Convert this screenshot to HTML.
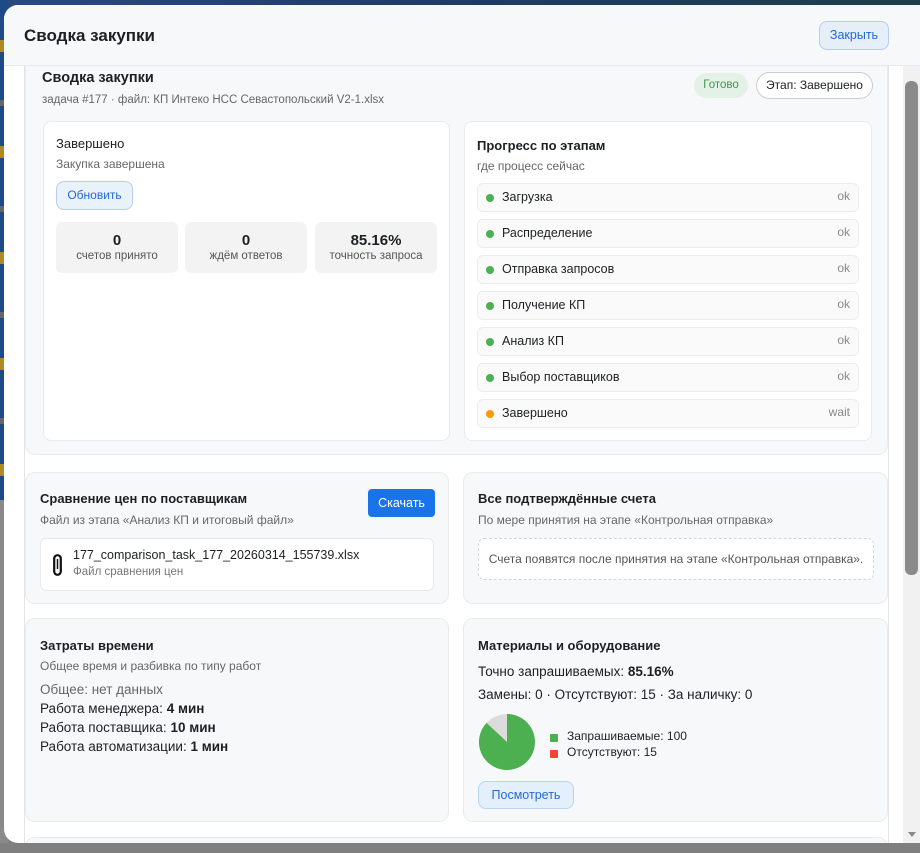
<!DOCTYPE html>
<html><head><meta charset="utf-8"><style>
*{box-sizing:border-box;margin:0;padding:0}
body{width:920px;height:853px;overflow:hidden;font-family:"Segoe UI","Liberation Sans","DejaVu Sans",sans-serif;color:#1d1f23;background:#7f7f7f;position:relative}
.bgtop{position:absolute;left:0;top:0;width:920px;height:12px;background:linear-gradient(90deg,#2a4a7a,#1f3b66 50%,#1d3f4a)}
.bgleft{position:absolute;left:0;top:0;width:8px;height:843px;background:repeating-linear-gradient(180deg,#1f4a8a 0 40px,#b08a20 40px 52px,#1f4a8a 52px 100px,#666 100px 106px)}
.bgleft2{position:absolute;left:0;top:500px;width:8px;height:343px;background:#8a8a8a}
.modal{position:absolute;left:4px;top:5px;width:930px;height:838px;background:#fff;border-radius:14px;overflow:hidden}
.hdr{height:61px;background:#f7f8fa;border-bottom:1px solid #e6e8eb;position:relative;z-index:2}
.hdr h1{position:absolute;left:20px;top:21px;font-size:17px;font-weight:700}
.btn-l{position:absolute;background:#e6eef8;border:1px solid #b5cdee;color:#2468d8;border-radius:8px;font-size:12.5px;text-align:center}
.scroll{position:absolute;left:20px;top:61px;width:865px;height:777px;border-left:1px solid #e2e4e7;border-right:1px solid #e2e4e7;overflow:hidden}
.card{position:absolute;background:#f7f8fa;border:1px solid #e8eaed;border-radius:10px}
.wcard{position:absolute;background:#fff;border:1px solid #e8eaed;border-radius:8px}
.t{position:absolute;white-space:nowrap}
.b{font-weight:700}
.sub{color:#666;font-size:12px}
.stat{position:absolute;top:100px;width:122px;height:51px;background:#f3f3f3;border-radius:6px;text-align:center}
.stat .n{font-size:15px;font-weight:700;margin-top:10px}
.stat .l{font-size:11.5px;color:#555;margin-top:1px}
.row{position:absolute;left:12px;width:382px;height:29px;background:#fafafa;border:1px solid #ececec;border-radius:6px;font-size:12.5px}
.row .d{position:absolute;left:8px;top:10px;width:8px;height:8px;border-radius:50%;background:#4caf50}
.row .x{position:absolute;left:24px;top:6px}
.row .s{position:absolute;right:8px;top:5px;color:#888;font-size:12px}
.sb{position:absolute;left:903px;top:12px;width:17px;height:831px;background:#f1f1f1}
</style></head><body>
<div class="bgtop"></div><div class="bgleft"></div><div class="bgleft2"></div>
<div class="modal">
 <div class="hdr"><h1>Сводка закупки</h1>
  <div class="btn-l" style="left:815px;top:16px;width:70px;height:29px;line-height:27px">Закрыть</div></div>
 <div class="scroll">
  <!-- summary card -->
  <div class="card" style="left:0;top:-20px;width:863px;height:409px;border-top:none;border-radius:0 0 10px 10px">
   <div class="t b" style="left:16px;top:24px;font-size:14.5px">Сводка закупки</div>
   <div class="t sub" style="left:16px;top:48px;font-size:11.5px">задача #177 · файл: КП Интеко НСС Севастопольский V2-1.xlsx</div>
   <div class="t" style="left:668px;top:27px;width:54px;height:25px;border-radius:13px;background:#e3f1e6;color:#3a9a4e;font-size:11.5px;text-align:center;line-height:25px">Готово</div>
   <div class="t" style="left:730px;top:26px;width:117px;height:27px;border-radius:14px;background:#fff;border:1px solid #ccc;font-size:12px;text-align:center;line-height:25px">Этап: Завершено</div>
   <div class="wcard" style="left:17px;top:75px;width:407px;height:320px">
    <div class="t" style="left:12px;top:14px;font-size:13px">Завершено</div>
    <div class="t sub" style="left:12px;top:35px">Закупка завершена</div>
    <div class="btn-l" style="left:12px;top:59px;width:77px;height:29px;line-height:27px;font-size:12px;background:#e9f1fb">Обновить</div>
    <div class="stat" style="left:12px"><div class="n">0</div><div class="l">счетов принято</div></div>
    <div class="stat" style="left:141px"><div class="n">0</div><div class="l">ждём ответов</div></div>
    <div class="stat" style="left:271px"><div class="n">85.16%</div><div class="l">точность запроса</div></div>
   </div>
   <div class="wcard" style="left:438px;top:75px;width:408px;height:320px">
    <div class="t b" style="left:12px;top:16px;font-size:13px">Прогресс по этапам</div>
    <div class="t sub" style="left:12px;top:37px">где процесс сейчас</div>
    <div class="row" style="top:61px"><div class="d"></div><div class="x">Загрузка</div><div class="s">ok</div></div>
    <div class="row" style="top:97px"><div class="d"></div><div class="x">Распределение</div><div class="s">ok</div></div>
    <div class="row" style="top:133px"><div class="d"></div><div class="x">Отправка запросов</div><div class="s">ok</div></div>
    <div class="row" style="top:169px"><div class="d"></div><div class="x">Получение КП</div><div class="s">ok</div></div>
    <div class="row" style="top:205px"><div class="d"></div><div class="x">Анализ КП</div><div class="s">ok</div></div>
    <div class="row" style="top:241px"><div class="d"></div><div class="x">Выбор поставщиков</div><div class="s">ok</div></div>
    <div class="row" style="top:277px"><div class="d" style="background:#ff9800"></div><div class="x">Завершено</div><div class="s">wait</div></div>
   </div>
  </div>
  <!-- comparison -->
  <div class="card" style="left:0;top:406px;width:424px;height:132px">
   <div class="t b" style="left:14px;top:18px;font-size:13px">Сравнение цен по поставщикам</div>
   <div class="t sub" style="left:14px;top:40px">Файл из этапа «Анализ КП и итоговый файл»</div>
   <div style="position:absolute;left:342px;top:16px;width:67px;height:28px;background:#1a73e8;border-radius:4px;color:#fff;font-size:12.5px;text-align:center;line-height:28px">Скачать</div>
   <div class="wcard" style="left:14px;top:65px;width:394px;height:53px;border-radius:6px">
    <svg style="position:absolute;left:12px;top:15px" width="9" height="22" viewBox="0 0 9 22"><rect x="1.2" y="1.2" width="6.6" height="19.6" rx="3.3" fill="none" stroke="#111" stroke-width="2.2"/><line x1="4.5" y1="5" x2="4.5" y2="15" stroke="#111" stroke-width="1.5"/></svg>
    <div class="t" style="left:32px;top:9px;font-size:12.5px">177_comparison_task_177_20260314_155739.xlsx</div>
    <div class="t sub" style="left:32px;top:27px;font-size:11.5px;color:#777">Файл сравнения цен</div>
   </div>
  </div>
  <div class="card" style="left:438px;top:406px;width:425px;height:132px">
   <div class="t b" style="left:14px;top:18px;font-size:13px">Все подтверждённые счета</div>
   <div class="t sub" style="left:14px;top:40px">По мере принятия на этапе «Контрольная отправка»</div>
   <div style="position:absolute;left:14px;top:65px;width:396px;height:42px;border:1px dashed #d3d5d8;border-radius:6px;background:#fff;font-size:12px;color:#555;text-align:center;line-height:40px">Счета появятся после принятия на этапе «Контрольная отправка».</div>
  </div>
  <!-- time -->
  <div class="card" style="left:0;top:552px;width:424px;height:204px">
   <div class="t b" style="left:14px;top:19px;font-size:13px">Затраты времени</div>
   <div class="t sub" style="left:14px;top:40px">Общее время и разбивка по типу работ</div>
   <div class="t" style="left:14px;top:63px;font-size:13.5px;color:#666">Общее: нет данных</div>
   <div class="t" style="left:14px;top:82px;font-size:13.5px">Работа менеджера: <b>4 мин</b></div>
   <div class="t" style="left:14px;top:101px;font-size:13.5px">Работа поставщика: <b>10 мин</b></div>
   <div class="t" style="left:14px;top:120px;font-size:13.5px">Работа автоматизации: <b>1 мин</b></div>
  </div>
  <div class="card" style="left:438px;top:552px;width:425px;height:204px">
   <div class="t b" style="left:14px;top:19px;font-size:13px">Материалы и оборудование</div>
   <div class="t" style="left:14px;top:45px;font-size:13.5px">Точно запрашиваемых: <b>85.16%</b></div>
   <div class="t" style="left:14px;top:68px;font-size:13.5px">Замены: 0 · Отсутствуют: 15 · За наличку: 0</div>
   <svg style="position:absolute;left:14px;top:94px" width="58" height="58" viewBox="-29 -29 58 58"><circle r="28" fill="#dcdcdc"/><path d="M0 0 L0 -28 A28 28 0 1 1 -20.5 -19.1 Z" fill="#4caf50"/></svg>
   <div style="position:absolute;left:86px;top:115px;width:8px;height:8px;background:#4caf50;border-radius:1px"></div>
   <div class="t" style="left:103px;top:110px;font-size:12px">Запрашиваемые: 100</div>
   <div style="position:absolute;left:86px;top:131px;width:8px;height:8px;background:#f44336;border-radius:1px"></div>
   <div class="t" style="left:103px;top:126px;font-size:12px">Отсутствуют: 15</div>
   <div class="btn-l" style="left:14px;top:162px;width:96px;height:28px;line-height:26px;font-size:12.5px;background:#e3f0fc;border-color:#b7d5f3">Посмотреть</div>
  </div>
  <div class="card" style="left:0;top:771px;width:863px;height:40px"></div>
 </div>
</div>
<div class="sb">
 <div style="position:absolute;left:5px;top:3px;width:0;height:0;border-left:4px solid transparent;border-right:4px solid transparent;border-bottom:5px solid #888"></div>
 <div style="position:absolute;left:2px;top:69px;width:13px;height:494px;background:#8a8a8a;border-radius:6px"></div>
 <div style="position:absolute;left:5px;top:820px;width:0;height:0;border-left:4px solid transparent;border-right:4px solid transparent;border-top:5px solid #888"></div>
</div>
</body></html>
